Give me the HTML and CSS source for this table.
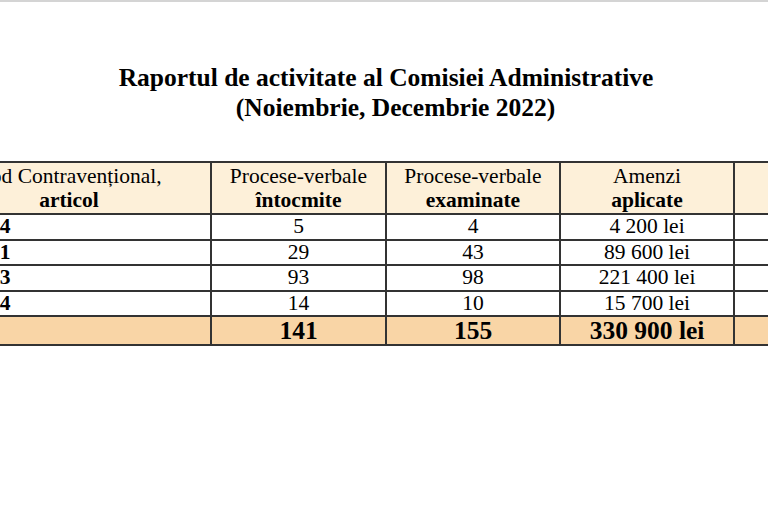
FILE: index.html
```html
<!DOCTYPE html>
<html lang="ro">
<head>
<meta charset="utf-8">
<title>Raportul de activitate</title>
<link rel="stylesheet" href="styles.css">
</head>
<body>
<div class="page">
  <h1 class="title"><span class="line">Raportul de activitate al Comisiei Administrative</span><span class="line line2">(Noiembrie, Decembrie 2022)</span></h1>
  <table class="report">
    <colgroup>
      <col class="c1"><col class="c2"><col class="c3"><col class="c4"><col class="c5">
    </colgroup>
    <thead>
      <tr class="head">
        <th class="first">Cod Contravențional,<br><b>articol</b></th>
        <th>Procese-verbale<br><b>întocmite</b></th>
        <th>Procese-verbale<br><b>examinate</b></th>
        <th>Amenzi<br><b>aplicate</b></th>
        <th></th>
      </tr>
    </thead>
    <tbody>
      <tr><td class="art">art. 354</td><td>5</td><td>4</td><td>4 200 lei</td><td></td></tr>
      <tr><td class="art">art. 361</td><td>29</td><td>43</td><td>89 600 lei</td><td></td></tr>
      <tr><td class="art">art. 373</td><td>93</td><td>98</td><td>221 400 lei</td><td></td></tr>
      <tr><td class="art">art. 394</td><td>14</td><td>10</td><td>15 700 lei</td><td></td></tr>
      <tr class="total"><td></td><td>141</td><td>155</td><td>330 900 lei</td><td></td></tr>
    </tbody>
  </table>
</div>
</body>
</html>
```
FILE: styles.css
```css
html, body {
  margin: 0;
  padding: 0;
  background: #ffffff;
}
body {
  font-family: "Liberation Serif", "Times New Roman", serif;
  color: #000;
  width: 768px;
  height: 512px;
  overflow: hidden;
}
.page {
  border-top: 2px solid #d4d4d4;
  width: 768px;
  overflow: hidden;
  padding-top: 61px;
}
.title {
  margin: 0;
  width: 772px;
  text-align: center;
  font-size: 25.5px;
  line-height: 30px;
  font-weight: bold;
}
.title .line { display: block; }
.title .line2 { padding-left: 19px; }
.report {
  margin: 38px 0 0 -70px;
  border-collapse: collapse;
  table-layout: fixed;
  width: 978px;
  font-size: 21.5px;
}
.c1 { width: 280px; }
.c2 { width: 175px; }
.c3 { width: 174px; }
.c4 { width: 174px; }
.c5 { width: 175px; }
.report th, .report td {
  border: 2px solid #333333;
  padding: 0;
  text-align: center;
  white-space: nowrap;
  overflow: hidden;
}
.report th {
  font-weight: normal;
  line-height: 24px;
  height: 50px;
}
.report th.first { padding-right: 4px; }
.report th b { font-weight: bold; }
.head { background: #fdf0d9; }
.report td {
  height: 23.5px;
  line-height: 23px;
}
.report td.art {
  text-align: left;
  padding-left: 8px;
  font-weight: bold;
}
.total {
  background: #f9d5a6;
  font-weight: bold;
  font-size: 25.5px;
}
.total td { height: 27px; line-height: 27px; }
```
